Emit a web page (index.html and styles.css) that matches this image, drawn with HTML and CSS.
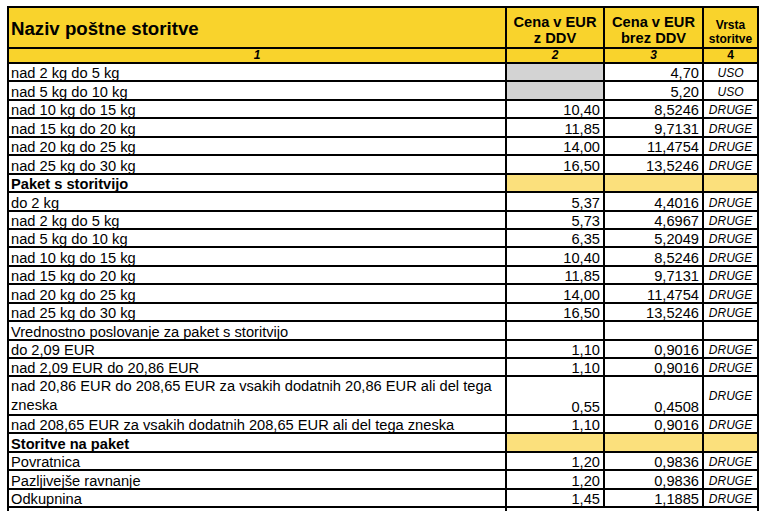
FILE: index.html
```html
<!DOCTYPE html>
<html lang="sl">
<head>
<meta charset="utf-8">
<title>Cenik poštnih storitev</title>
<link rel="stylesheet" href="styles.css">
</head>
<body>
<table class="cenik">
  <colgroup>
    <col class="c1"><col class="c2"><col class="c3"><col class="c4">
  </colgroup>
  <thead>
    <tr class="head">
      <th class="title">Naziv poštne storitve</th>
      <th class="price-h">Cena v EUR<br>z DDV</th>
      <th class="price-h">Cena v EUR<br>brez DDV</th>
      <th class="type-h">Vrsta<br>storitve</th>
    </tr>
    <tr class="nums">
      <th class="it">1</th>
      <th class="it">2</th>
      <th class="it">3</th>
      <th>4</th>
    </tr>
  </thead>
  <tbody>
    <tr><td>nad 2 kg do 5 kg</td><td class="grey"></td><td class="n">4,70</td><td class="t">USO</td></tr>
    <tr><td>nad 5 kg do 10 kg</td><td class="grey"></td><td class="n">5,20</td><td class="t">USO</td></tr>
    <tr><td>nad 10 kg do 15 kg</td><td class="n">10,40</td><td class="n">8,5246</td><td class="t">DRUGE</td></tr>
    <tr><td>nad 15 kg do 20 kg</td><td class="n">11,85</td><td class="n">9,7131</td><td class="t">DRUGE</td></tr>
    <tr><td>nad 20 kg do 25 kg</td><td class="n">14,00</td><td class="n">11,4754</td><td class="t">DRUGE</td></tr>
    <tr><td>nad 25 kg do 30 kg</td><td class="n">16,50</td><td class="n">13,5246</td><td class="t">DRUGE</td></tr>
    <tr class="section"><td>Paket s storitvijo</td><td class="ly"></td><td class="ly"></td><td class="ly"></td></tr>
    <tr><td>do 2 kg</td><td class="n">5,37</td><td class="n">4,4016</td><td class="t">DRUGE</td></tr>
    <tr><td>nad 2 kg do 5 kg</td><td class="n">5,73</td><td class="n">4,6967</td><td class="t">DRUGE</td></tr>
    <tr><td>nad 5 kg do 10 kg</td><td class="n">6,35</td><td class="n">5,2049</td><td class="t">DRUGE</td></tr>
    <tr><td>nad 10 kg do 15 kg</td><td class="n">10,40</td><td class="n">8,5246</td><td class="t">DRUGE</td></tr>
    <tr><td>nad 15 kg do 20 kg</td><td class="n">11,85</td><td class="n">9,7131</td><td class="t">DRUGE</td></tr>
    <tr><td>nad 20 kg do 25 kg</td><td class="n">14,00</td><td class="n">11,4754</td><td class="t">DRUGE</td></tr>
    <tr><td>nad 25 kg do 30 kg</td><td class="n">16,50</td><td class="n">13,5246</td><td class="t">DRUGE</td></tr>
    <tr><td>Vrednostno poslovanje za paket s storitvijo</td><td></td><td></td><td></td></tr>
    <tr><td>do 2,09 EUR</td><td class="n">1,10</td><td class="n">0,9016</td><td class="t">DRUGE</td></tr>
    <tr><td>nad 2,09 EUR do 20,86 EUR</td><td class="n">1,10</td><td class="n">0,9016</td><td class="t">DRUGE</td></tr>
    <tr class="double"><td class="wrap">nad 20,86 EUR do 208,65 EUR za vsakih dodatnih 20,86 EUR ali del tega zneska</td><td class="n">0,55</td><td class="n">0,4508</td><td class="t mid">DRUGE</td></tr>
    <tr><td>nad 208,65 EUR za vsakih dodatnih 208,65 EUR ali del tega zneska</td><td class="n">1,10</td><td class="n">0,9016</td><td class="t">DRUGE</td></tr>
    <tr class="section"><td>Storitve na paket</td><td class="ly"></td><td class="ly"></td><td class="ly"></td></tr>
    <tr><td>Povratnica</td><td class="n">1,20</td><td class="n">0,9836</td><td class="t">DRUGE</td></tr>
    <tr><td>Pazljivejše ravnanje</td><td class="n">1,20</td><td class="n">0,9836</td><td class="t">DRUGE</td></tr>
    <tr><td>Odkupnina</td><td class="n">1,45</td><td class="n">1,1885</td><td class="t">DRUGE</td></tr>
    <tr class="last"><td>Vročitev osebno naslovniku</td><td colspan="3"></td></tr>
  </tbody>
</table>
</body>
</html>
```

FILE: styles.css
```css
html, body {
  margin: 0;
  padding: 0;
  background: #ffffff;
  overflow: hidden;
}

body {
  height: 511px;
  font-family: "Liberation Sans", Arial, sans-serif;
  color: #000000;
}

.cenik {
  border-collapse: collapse;
  table-layout: fixed;
  width: 750px;
  margin: 6px 0 0 7px;
}

.c1 { width: 498px; }
.c2 { width: 98px; }
.c3 { width: 99px; }
.c4 { width: 55px; }

.cenik th,
.cenik td {
  border: 2px solid #000000;
  padding: 0;
}

/* header */
.head { height: 41px; }

.head th {
  background: #f9d32c;
  font-weight: bold;
  vertical-align: bottom;
}

.head .title {
  text-align: left;
  font-size: 18.67px;
  line-height: 21px;
  padding: 0 0 8px 2px;
}

.head .price-h {
  text-align: center;
  font-size: 14.67px;
  line-height: 16.7px;
}

.head .type-h {
  text-align: center;
  font-size: 12px;
  line-height: 14px;
  padding-bottom: 1px;
}

.nums { height: 14.5px; }

.nums th {
  background: #f9d32c;
  font-size: 12px;
  line-height: 13px;
  font-weight: bold;
  text-align: center;
  vertical-align: bottom;
}

.nums .it { font-style: italic; }

/* body rows */
.cenik tbody tr { height: 18.45px; }

.cenik td {
  font-size: 14.67px;
  line-height: 14px;
  vertical-align: bottom;
  padding-left: 2px;
  white-space: nowrap;
}

.cenik td.n {
  text-align: right;
  padding: 0 3px 0 0;
}

.cenik td.t {
  text-align: center;
  font-size: 12px;
  font-style: italic;
  padding: 0;
}

.cenik td.mid { vertical-align: middle; }

.cenik td.grey { background: #d3d3d3; }
.cenik td.ly { background: #fbe07c; }

.section td:first-child { font-weight: bold; }

.cenik tr.double { height: 37.2px; }

.cenik td.wrap {
  white-space: normal;
  vertical-align: top;
  line-height: 18.3px;
}

.cenik tr.last { height: 18.45px; }
```
